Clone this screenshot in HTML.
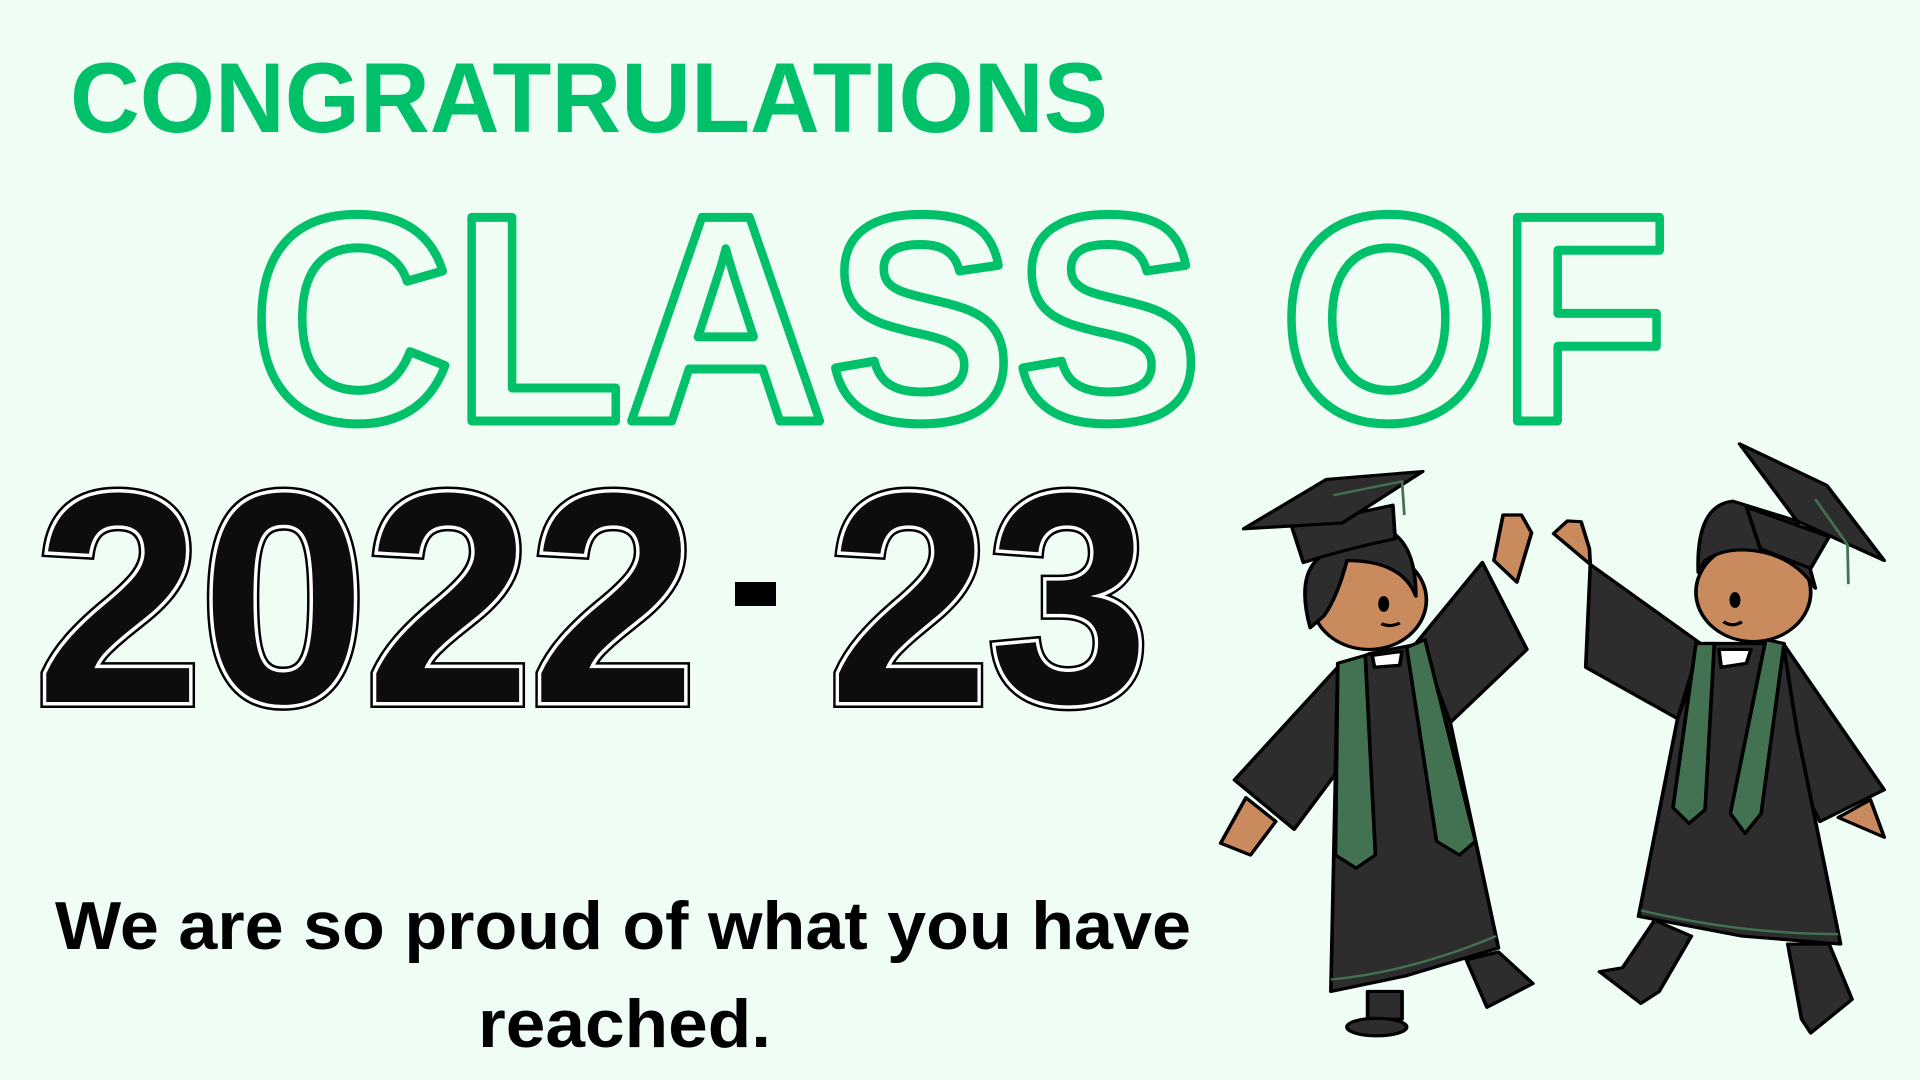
<!DOCTYPE html>
<html><head><meta charset="utf-8"><style>
html,body{margin:0;padding:0;background:#effdf4;}
svg{display:block}
text{font-family:"Liberation Sans",sans-serif;font-weight:bold}
</style></head><body>
<svg width="1920" height="1080" viewBox="0 0 1920 1080" xmlns="http://www.w3.org/2000/svg">
<rect width="1920" height="1080" fill="#effdf4"/>
<text x="70" y="132" font-size="99" fill="#00c16a" textLength="1038" lengthAdjust="spacingAndGlyphs">CONGRATRULATIONS</text>
<text x="250" y="421" font-size="296" fill="#effdf4" stroke="#00c16a" stroke-width="9" stroke-linejoin="round" textLength="1420" lengthAdjust="spacingAndGlyphs">CLASS OF</text>
<g font-size="300" stroke-linejoin="miter">
 <text x="36" y="702" fill="#000" stroke="#000" stroke-width="12" textLength="660" lengthAdjust="spacingAndGlyphs">2022</text>
 <text x="36" y="702" fill="#fff" stroke="#fff" stroke-width="7" textLength="660" lengthAdjust="spacingAndGlyphs">2022</text>
 <text x="36" y="702" fill="#0d0d0d" textLength="660" lengthAdjust="spacingAndGlyphs">2022</text>
 <text x="829" y="702" fill="#000" stroke="#000" stroke-width="12" textLength="320" lengthAdjust="spacingAndGlyphs">23</text>
 <text x="829" y="702" fill="#fff" stroke="#fff" stroke-width="7" textLength="320" lengthAdjust="spacingAndGlyphs">23</text>
 <text x="829" y="702" fill="#0d0d0d" textLength="320" lengthAdjust="spacingAndGlyphs">23</text>
</g>
<rect x="735" y="582" width="41" height="24" fill="#000"/>
<text x="55" y="949" font-size="68" fill="#000" textLength="1136" lengthAdjust="spacingAndGlyphs">We are so proud of what you have</text>
<text x="478" y="1047" font-size="68" fill="#000" textLength="293" lengthAdjust="spacingAndGlyphs">reached.</text>

<g transform="translate(1200,430) scale(0.4592,0.3954)" stroke="#000" stroke-width="8" stroke-linejoin="round">
 <!-- LEFT FIGURE -->
 <g>
  <path d="M365 1420 L440 1420 L440 1490 L365 1490Z" fill="#2d2d2d"/>
  <ellipse cx="385" cy="1510" rx="65" ry="22" fill="#2d2d2d"/>
  <path d="M580 1340 L650 1320 L725 1400 L625 1460Z" fill="#2d2d2d"/>
  <path d="M100 930 L45 1045 L110 1075 L165 990Z" fill="#c98a5e"/>
  <path d="M640 330 L660 215 L700 215 L722 260 L690 385Z" fill="#c98a5e"/>
  <path d="M300 600 L75 885 L205 1010 L295 870Z" fill="#2d2d2d"/>
  <path d="M470 540 L615 335 L712 555 L545 740Z" fill="#2d2d2d"/>
  <path d="M300 600 L370 565 L480 540 L545 740 L650 1310 L450 1380 L285 1420 Z" fill="#2d2d2d"/>
  <path d="M300 590 L360 570 L382 1075 L340 1108 L295 1075Z" fill="#427252"/>
  <path d="M450 550 L490 530 L600 1040 L565 1075 L515 1040Z" fill="#427252"/>
  <path d="M285 1390 Q460 1370 645 1280" fill="none" stroke="#427252" stroke-width="6"/>
  <circle cx="368" cy="430" r="125" fill="#c98a5e"/>
  <path d="M240 500 Q200 330 300 300 L420 260 Q470 300 470 420 Q440 330 320 330 Q300 420 270 470Z" fill="#2d2d2d"/>
  <path d="M200 245 L420 190 L425 275 Q320 300 225 335Z" fill="#2d2d2d"/>
  <path d="M95 250 L275 125 L485 105 L310 235Z" fill="#2d2d2d"/>
  <path d="M290 165 L440 130 L445 215" fill="none" stroke="#427252" stroke-width="6"/>
  <ellipse cx="400" cy="440" rx="8" ry="16" fill="#000"/>
  <path d="M395 490 Q415 500 435 488" fill="none"/>
  <path d="M375 570 L440 560 L435 595 L380 600Z" fill="#fff"/>
 </g>
 <!-- RIGHT FIGURE -->
 <g>
  <path d="M990 1240 L1070 1280 L1000 1420 L960 1450 L870 1370 L920 1360Z" fill="#2d2d2d"/>
  <path d="M1280 1300 L1370 1300 L1420 1440 L1330 1525 L1310 1490Z" fill="#2d2d2d"/>
  <path d="M850 340 L770 262 L800 230 L830 232 L848 300Z" fill="#c98a5e"/>
  <path d="M1390 980 L1490 1030 L1460 935Z" fill="#c98a5e"/>
  <path d="M1090 540 L850 340 L840 600 L1040 730Z" fill="#2d2d2d"/>
  <path d="M1270 540 L1490 910 L1350 990 L1250 760Z" fill="#2d2d2d"/>
  <path d="M1100 540 L1270 540 L1300 760 L1395 1300 L1180 1280 L955 1230 L1040 730Z" fill="#2d2d2d"/>
  <path d="M1080 540 L1120 540 L1100 960 L1065 995 L1030 955Z" fill="#427252"/>
  <path d="M1232 530 L1272 540 L1222 970 L1187 1020 L1155 970Z" fill="#427252"/>
  <path d="M960 1215 Q1180 1275 1390 1275" fill="none" stroke="#427252" stroke-width="6"/>
  <circle cx="1205" cy="410" r="125" fill="#c98a5e"/>
  <path d="M1085 360 Q1080 190 1160 180 L1300 230 L1340 400 Q1300 330 1230 310 Q1150 290 1100 330Z" fill="#2d2d2d"/>
  <path d="M1190 195 L1370 270 L1330 350 L1220 300Z" fill="#2d2d2d"/>
  <path d="M1175 35 L1365 140 L1490 330 L1300 230Z" fill="#2d2d2d"/>
  <path d="M1340 175 L1410 290 L1412 390" fill="none" stroke="#427252" stroke-width="6"/>
  <ellipse cx="1165" cy="430" rx="8" ry="16" fill="#000"/>
  <path d="M1140 485 Q1160 500 1180 485" fill="none"/>
  <path d="M1130 555 L1200 555 L1190 590 L1135 600Z" fill="#fff"/>
 </g>
</g>
</svg>
</body></html>
